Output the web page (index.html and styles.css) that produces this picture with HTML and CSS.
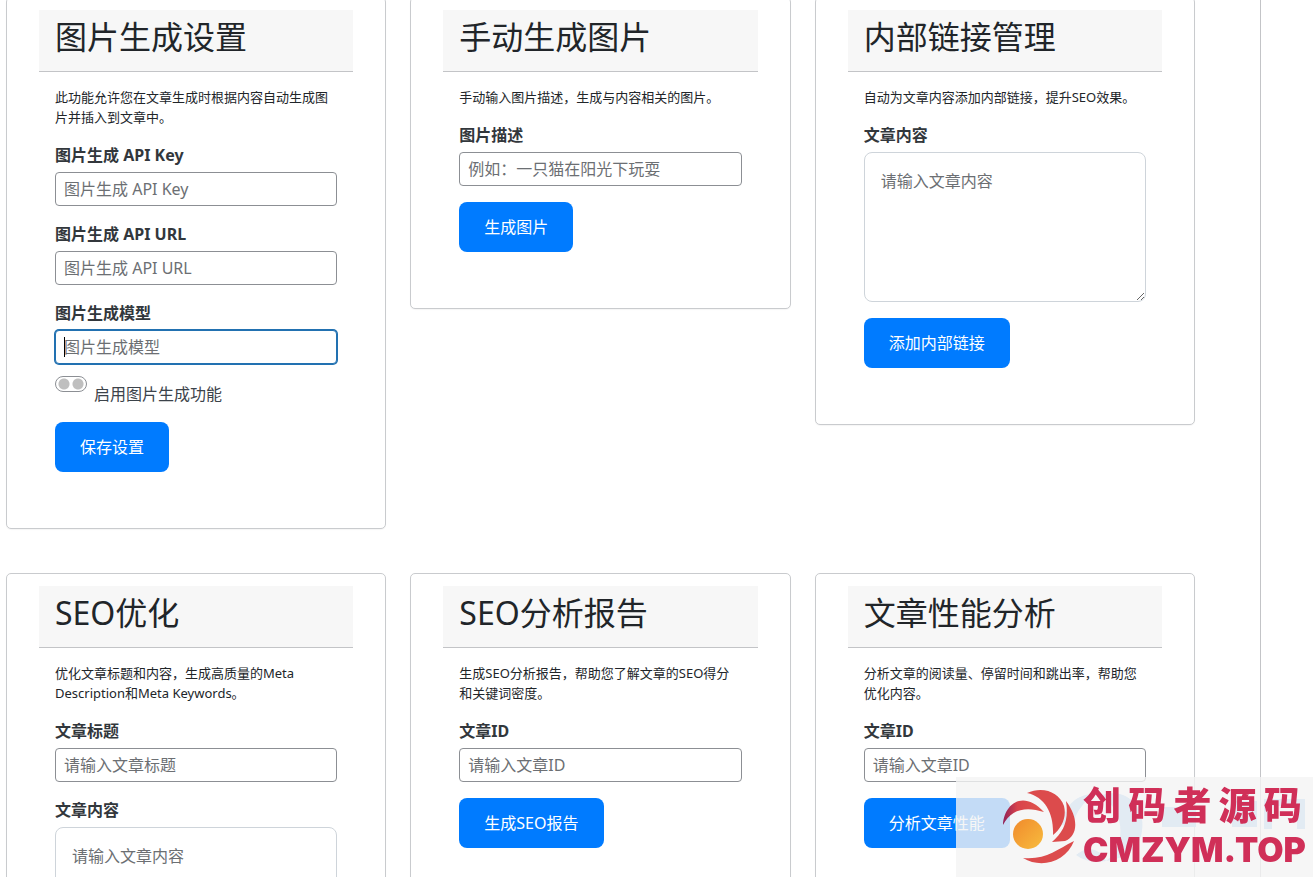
FILE: index.html
```
<!DOCTYPE html>
<html lang="zh-CN">
<head>
    <meta charset="UTF-8">
    <meta name="viewport" content="width=device-width, initial-scale=1.0">
    <title>图片生成与SEO设置</title>
    <link rel="stylesheet" href="styles.css">
</head>
<body>
    <main class="panel">
        <section class="card">
            <h2 class="card-header">图片生成设置</h2>
            <form class="card-body">
                <p class="card-text">此功能允许您在文章生成时根据内容自动生成图片并插入到文章中。</p>
                <div class="field">
                    <label for="api-key">图片生成 API Key</label>
                    <input type="text" id="api-key" placeholder="图片生成 API Key">
                </div>
                <div class="field">
                    <label for="api-url">图片生成 API URL</label>
                    <input type="text" id="api-url" placeholder="图片生成 API URL">
                </div>
                <div class="field field-active">
                    <label for="api-model">图片生成模型</label>
                    <input type="text" id="api-model" placeholder="图片生成模型">
                </div>
                <div class="switch">
                    <input type="checkbox" id="image-enabled">
                    <label for="image-enabled">启用图片生成功能</label>
                </div>
                <button type="button" class="btn">保存设置</button>
            </form>
        </section>

        <section class="card">
            <h2 class="card-header">手动生成图片</h2>
            <form class="card-body">
                <p class="card-text">手动输入图片描述，生成与内容相关的图片。</p>
                <div class="field">
                    <label for="image-prompt">图片描述</label>
                    <input type="text" id="image-prompt" placeholder="例如：一只猫在阳光下玩耍">
                </div>
                <button type="button" class="btn">生成图片</button>
            </form>
        </section>

        <section class="card">
            <h2 class="card-header">内部链接管理</h2>
            <form class="card-body">
                <p class="card-text">自动为文章内容添加内部链接，提升SEO效果。</p>
                <div class="field">
                    <label for="link-content">文章内容</label>
                    <textarea id="link-content" placeholder="请输入文章内容"></textarea>
                </div>
                <button type="button" class="btn">添加内部链接</button>
            </form>
        </section>

        <section class="card">
            <h2 class="card-header">SEO优化</h2>
            <form class="card-body">
                <p class="card-text">优化文章标题和内容，生成高质量的Meta Description和Meta Keywords。</p>
                <div class="field">
                    <label for="seo-title">文章标题</label>
                    <input type="text" id="seo-title" placeholder="请输入文章标题">
                </div>
                <div class="field">
                    <label for="seo-content">文章内容</label>
                    <textarea id="seo-content" placeholder="请输入文章内容"></textarea>
                </div>
            </form>
        </section>

        <section class="card card-tall">
            <h2 class="card-header">SEO分析报告</h2>
            <form class="card-body">
                <p class="card-text">生成SEO分析报告，帮助您了解文章的SEO得分和关键词密度。</p>
                <div class="field">
                    <label for="report-id">文章ID</label>
                    <input type="text" id="report-id" placeholder="请输入文章ID">
                </div>
                <button type="button" class="btn">生成SEO报告</button>
            </form>
        </section>

        <section class="card card-tall">
            <h2 class="card-header">文章性能分析</h2>
            <form class="card-body">
                <p class="card-text">分析文章的阅读量、停留时间和跳出率，帮助您优化内容。</p>
                <div class="field">
                    <label for="perf-id">文章ID</label>
                    <input type="text" id="perf-id" placeholder="请输入文章ID">
                </div>
                <button type="button" class="btn">分析文章性能</button>
            </form>
        </section>
    </main>

    <aside class="watermark">
        <svg class="watermark-ghost" viewBox="0 0 357 100" aria-hidden="true">
            <path d="M106 48C108 26 124 16 140 17C128 24 120 34 116 50Z"/>
            <path d="M146 18C172 10 190 32 186 54C184 72 168 82 150 84C168 70 172 40 146 18Z"/>
            <path d="M120 78C132 68 144 72 150 84C138 86 128 84 120 78Z"/>
            <path d="M308 22H349V52H341V29H316V52H308Z"/>
            <path d="M276 24H301V50H276Z"/>
            <path d="M206 30H240V50H206Z"/>
        </svg>
        <svg class="watermark-logo" viewBox="0 0 74 76" aria-hidden="true">
            <defs>
                <linearGradient id="petal" x1="0" x2="1" y1="0" y2="0">
                    <stop offset="0" stop-color="#8f2158"/>
                    <stop offset="0.35" stop-color="#d9434b"/>
                    <stop offset="1" stop-color="#e0564c"/>
                </linearGradient>
                <linearGradient id="sun" x1="0" x2="1" y1="0" y2="1">
                    <stop offset="0" stop-color="#f08a2c"/>
                    <stop offset="1" stop-color="#f8bc3e"/>
                </linearGradient>
            </defs>
            <path fill="url(#petal)" d="M0 36C1 15 20 0 41 23C23 17 8 20 0 36Z"/>
            <path fill="#dc4b4c" d="M24 4C40-3 56 3 61 17C64 29 58 40 50 46C51 26 43 8 24 4Z"/>
            <path fill="#dc4b4c" d="M63 12C76 29 75 47 62 52L49 53C61 43 66 31 63 12Z"/>
            <path fill="#dc4b4c" d="M71 52C63 73 38 80 20 69C43 71 53 61 71 52Z"/>
            <circle fill="url(#sun)" cx="25" cy="45" r="15"/>
        </svg>
        <div class="watermark-text">
            <div class="watermark-name">
                <span>创</span><span>码</span><span>者</span><span>源</span><span>码</span>
            </div>
            <div class="watermark-url">CMZYM.TOP</div>
        </div>
    </aside>
</body>
</html>
```
FILE: styles.css
```
* {
    box-sizing: border-box;
}

body {
    margin: 0;
    height: 100vh;
    overflow: hidden;
    background-color: #fff;
    color: #212529;
    font-family: "Noto Sans", "Noto Sans CJK SC", sans-serif;
    font-size: 16px;
    line-height: 24px;
}

.panel {
    display: grid;
    grid-template-columns: repeat(3, 1fr);
    gap: 44px 24px;
    align-items: start;
    margin: -3px 52px 0 0;
    padding: 0 65px 0 6px;
    border-right: 1px solid #c3c4c7;
}

/* Tarjetas */
.card {
    padding: 12px 32px 40px;
    border: 1px solid #c9cbce;
    border-radius: 5px;
    background-color: #fff;
    box-shadow: 0 1px 1px rgba(0, 0, 0, 0.04);
}

.card-tall {
    min-height: 400px;
}

.card-header {
    margin: 0;
    padding: 8px 16px 15px;
    border-bottom: 1px solid #c3c4c7;
    background-color: #f7f7f7;
    font-size: 32px;
    font-weight: 400;
    line-height: 38px;
}

.card-body {
    padding: 15px 16px 16px;
}

.card-text {
    margin: 0 0 16px;
    font-size: 13px;
    line-height: 20px;
}

/* Campos */
.field {
    position: relative;
    display: flex;
    flex-direction: column;
    gap: 5px;
    margin-bottom: 16px;
}

.field label {
    color: #32373c;
    font-weight: 700;
}

.field input,
.field textarea {
    width: 100%;
    border: 1px solid #8c8f94;
    border-radius: 4px;
    background-color: #fff;
    color: #2c3338;
    font-family: inherit;
    font-size: 16px;
}

.field input {
    height: 34px;
    padding: 0 8px;
}

.field textarea {
    height: 150px;
    padding: 16px;
    border-color: #ced4da;
    border-radius: 8px;
    line-height: 24px;
    resize: vertical;
}

.field input::placeholder,
.field textarea::placeholder {
    color: #6c6f73;
    opacity: 1;
}

.field-active {
    margin-bottom: 12px;
}

.field-active input {
    border-color: #2271b1;
    box-shadow: 0 0 0 1px #2271b1;
}

.field-active::after {
    content: "";
    position: absolute;
    left: 9px;
    bottom: 7px;
    width: 1px;
    height: 20px;
    background-color: #000;
}

/* Interruptor */
.switch {
    display: flex;
    align-items: flex-start;
    gap: 7px;
    margin-bottom: 16px;
    color: #3c434a;
}

.switch input {
    appearance: none;
    width: 32px;
    height: 16px;
    margin: 0;
    border: 1px solid #8c8f94;
    border-radius: 8px;
    background-image:
        radial-gradient(circle at 8px 7px, #bfbfbf 5px, transparent 6px),
        radial-gradient(circle at 22px 7px, #bfbfbf 5px, transparent 6px);
}

.switch label {
    padding-top: 6px;
}

.btn {
    height: 50px;
    padding: 0 25px 2px;
    border: none;
    border-radius: 8px;
    background-color: #007bff;
    color: #fff;
    font-family: inherit;
    font-size: 16px;
    cursor: pointer;
}

/* Marca de agua */
.watermark {
    position: fixed;
    right: 0;
    bottom: 0;
    display: flex;
    align-items: center;
    gap: 6px;
    width: 357px;
    height: 100px;
    padding-left: 47px;
    background-color: rgba(244, 244, 244, 0.8);
}

.watermark-ghost {
    position: absolute;
    left: 0;
    top: 0;
    width: 357px;
    height: 100px;
    fill: #e2ebf3;
}

.watermark-logo {
    position: relative;
    width: 74px;
    height: 76px;
}

.watermark-text {
    position: relative;
    display: grid;
    gap: 6px;
    width: 220px;
    color: #d02f58;
    font-weight: 900;
}

.watermark-name {
    display: flex;
    justify-content: space-between;
    padding-right: 4px;
    font-family: "Noto Sans CJK SC", sans-serif;
    font-size: 38px;
    line-height: 40px;
}

.watermark-url {
    font-family: Inter, sans-serif;
    font-size: 34px;
    line-height: 42px;
    white-space: nowrap;
}
```
